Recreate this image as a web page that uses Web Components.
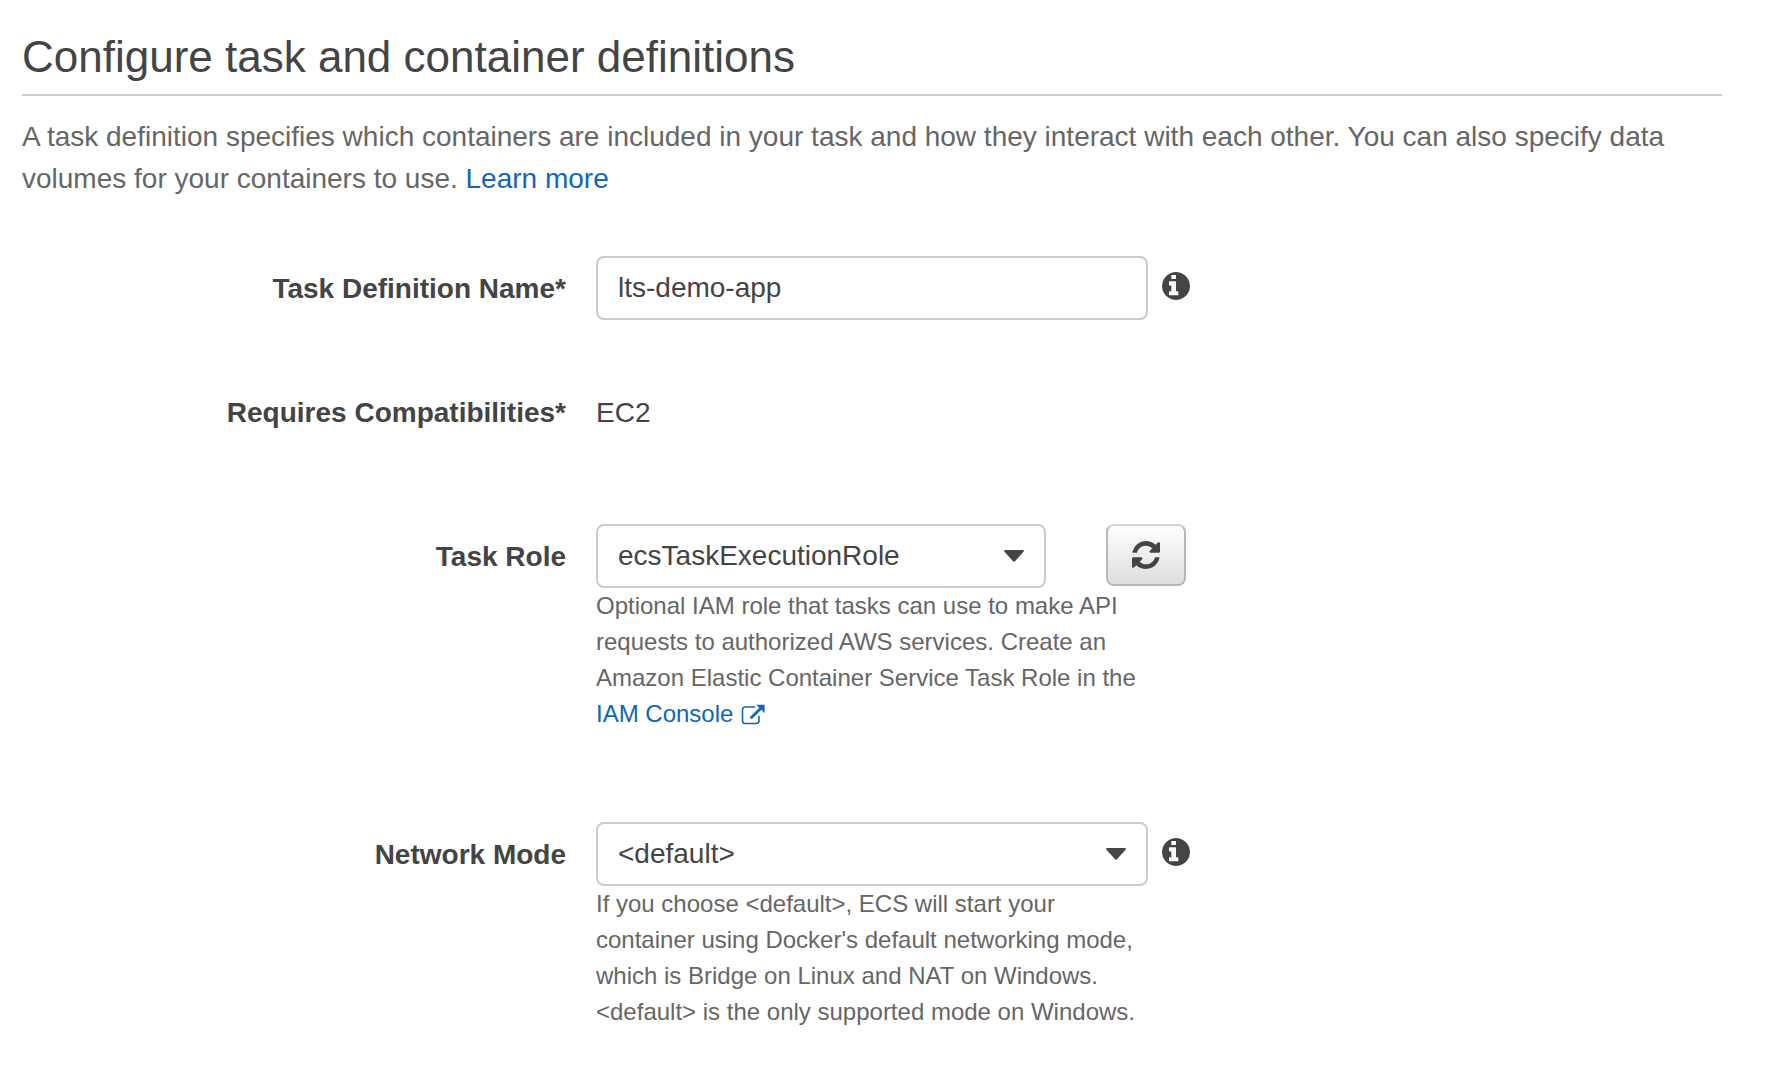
<!DOCTYPE html>
<html lang="en">
<head>
<meta charset="utf-8">
<meta name="viewport" content="width=device-width, initial-scale=1">
<title>Configure task and container definitions</title>
<style>
  body {
    margin: 0;
    background: #fff;
    color: #444;
    font: 28px/42px "Liberation Sans", Arial, sans-serif;
  }
</style>
</head>
<body>
<task-definition-page></task-definition-page>

<template id="page-template">
  <style>
    :host { display: block; padding: 33px 50px 32px 22px; }
    form { display: flex; flex-direction: column; gap: 60px; margin: 0; }
  </style>
  <page-intro heading="Configure task and container definitions">A task definition specifies which containers are included in your task and how they interact with each other. You can also specify data volumes for your containers to use. <text-link href="#learn-more">Learn more</text-link></page-intro>
  <form>
    <text-field label="Task Definition Name*" value="lts-demo-app">
      <info-button slot="action" label="About the task definition name"></info-button>
    </text-field>
    <static-field label="Requires Compatibilities*">EC2</static-field>
    <select-field label="Task Role" options="ecsTaskExecutionRole" narrow>
      <refresh-button slot="action"></refresh-button>
      <span slot="help">Optional IAM role that tasks can use to make API requests to authorized AWS services. Create an Amazon Elastic Container Service Task Role in the <text-link href="#iam-console" external>IAM Console</text-link></span>
    </select-field>
    <select-field label="Network Mode" options="&lt;default&gt;|Bridge|Host|None">
      <info-button slot="action" label="About network mode"></info-button>
      <span slot="help">If you choose &lt;default&gt;, ECS will start your container using Docker's default networking mode, which is Bridge on Linux and NAT on Windows. &lt;default&gt; is the only supported mode on Windows.</span>
    </select-field>
  </form>
</template>

<template id="intro-template">
  <style>
    :host { display: block; margin-bottom: 56px; }
    h1 {
      margin: 0 0 20px;
      padding-bottom: 13px;
      border-bottom: 2px solid #ccc;
      font-size: 44px;
      line-height: 48px;
      font-weight: normal;
    }
    p { margin: 0; color: #666; }
  </style>
  <h1></h1>
  <p><slot></slot></p>
</template>

<template id="link-template">
  <style>
    :host { display: inline; }
    a { color: #1166bb; text-decoration: none; }
    a:hover { text-decoration: underline; }
    svg { width: 24px; height: 21px; margin-left: 8px; vertical-align: -3px; }
    :host(:not([external])) svg { display: none; }
  </style>
  <a><slot></slot><svg viewBox="0 0 24 21" aria-hidden="true">
    <path d="M14 3H4.200Q1.500 3 1.500 5.700V16.800Q1.500 19.500 4.200 19.500H15.300Q18 19.500 18 16.800V12" fill="none" stroke="currentColor" stroke-width="1.600"/>
    <path d="M9.700 14.300 19.800 4.200" fill="none" stroke="currentColor" stroke-width="2.800"/>
    <path d="M15.200 .8H23.600V9.200Z" fill="currentColor"/>
  </svg></a>
</template>

<template id="field-template">
  <style>
    :host {
      display: grid;
      grid-template-columns: 32% minmax(0, 1fr);
      column-gap: 30px;
      align-items: start;
      --control-width: 552px;
      --action-gap: 14px;
    }
    :host([narrow]) { --control-width: 450px; --action-gap: 60px; }
    .label { padding-top: 12px; text-align: right; font-weight: bold; }
    .line { display: flex; gap: var(--action-gap); align-items: flex-start; }
    .control { flex: 0 1 var(--control-width); min-width: 0; display: grid; align-items: center; }
    .help {
      display: block;
      max-width: 552px;
      padding-bottom: 30px;
      color: #666;
      font-size: 24px;
      line-height: 36px;
    }
    .static { padding: 12px 0 30px; }
    input, select {
      grid-area: 1 / 1;
      box-sizing: border-box;
      width: 100%;
      height: 64px;
      margin: 0;
      padding: 0 20px;
      border: 2px solid #ccc;
      border-radius: 8px;
      background: #fff;
      color: inherit;
      font: inherit;
      appearance: none;
    }
    select { padding-right: 60px; }
    .arrow {
      grid-area: 1 / 1;
      justify-self: end;
      width: 20px;
      height: 12px;
      margin-right: 22px;
      pointer-events: none;
    }
  </style>
</template>

<template id="info-template">
  <style>
    :host { display: block; }
    button { display: block; margin: 0; padding: 16px 0; border: 0; background: none; color: inherit; cursor: pointer; }
    svg { display: block; width: 28px; height: 28px; }
  </style>
  <button type="button"><svg viewBox="128 128 1536 1536" fill="currentColor" aria-hidden="true"><path d="M1024 1376v-160q0-14-9-23t-23-9h-96v-512q0-14-9-23t-23-9h-320q-14 0-23 9t-9 23v160q0 14 9 23t23 9h96v320h-96q-14 0-23 9t-9 23v160q0 14 9 23t23 9h448q14 0 23-9t9-23zm-128-896v-160q0-14-9-23t-23-9h-192q-14 0-23 9t-9 23v160q0 14 9 23t23 9h192q14 0 23-9t9-23zm768 416q0 209-103 385.500t-279.500 279.500-385.500 103-385.500-103-279.500-279.500-103-385.500 103-385.500 279.500-279.500 385.500-103 385.500 103 279.500 279.500 103 385.500z"/></svg></button>
</template>

<template id="refresh-template">
  <style>
    :host { display: block; }
    button {
      display: grid;
      place-items: center;
      box-sizing: border-box;
      width: 80px;
      height: 62px;
      margin: 0;
      padding: 0;
      border: 2px solid #b8b8b8;
      border-top-color: #d4d4d4;
      border-radius: 8px;
      background: linear-gradient(#fff, #ddd);
      background-clip: padding-box;
      color: inherit;
      cursor: pointer;
    }
    svg { display: block; width: 28px; height: 28px; }
  </style>
  <button type="button" aria-label="Refresh roles"><svg viewBox="128 128 1536 1536" fill="currentColor" aria-hidden="true"><path d="M1639 1056q0 5-1 7-64 268-268 434.500t-478 166.500q-146 0-282.500-55t-243.500-157l-129 129q-19 19-45 19t-45-19-19-45v-448q0-26 19-45t45-19h448q26 0 45 19t19 45-19 45l-137 137q71 66 161 102t187 36q134 0 250-65t186-179q11-17 53-117 8-23 30-23h192q13 0 22.500 9.500t9.500 22.500zm25-800v448q0 26-19 45t-45 19h-448q-26 0-45-19t-19-45 19-45l138-138q-148-137-349-137-134 0-250 65t-186 179q-11 17-53 117-8 23-30 23h-199q-13 0-22.500-9.500t-9.500-22.500v-7q65-268 270-434.500t480-166.500q146 0 284 55.500t245 156.500l130-129q19-19 45-19t45 19 19 45z"/></svg></button>
</template>

<script>
  class BaseElement extends HTMLElement {
    constructor() {
      super();
      this.attachShadow({ mode: "open" });
    }
    connectedCallback() {
      if (this.shadowRoot.childNodes.length) return;
      const template = document.getElementById(this.constructor.template);
      this.shadowRoot.append(document.importNode(template.content, true));
      this.render(this.shadowRoot);
    }
    render() {}
  }

  class TaskDefinitionPage extends BaseElement {
    static template = "page-template";
  }

  class PageIntro extends BaseElement {
    static template = "intro-template";
    render(root) {
      root.querySelector("h1").textContent = this.getAttribute("heading");
    }
  }

  class TextLink extends BaseElement {
    static template = "link-template";
    render(root) {
      root.querySelector("a").href = this.getAttribute("href");
    }
  }

  class InfoButton extends BaseElement {
    static template = "info-template";
    render(root) {
      root.querySelector("button").setAttribute("aria-label", this.getAttribute("label"));
    }
  }

  class RefreshButton extends BaseElement {
    static template = "refresh-template";
  }

  class TextField extends BaseElement {
    static template = "field-template";
    render(root) {
      root.append(document.createRange().createContextualFragment(`
        <label class="label" for="control"></label>
        <div class="line">
          <div class="control"><input id="control" type="text"></div>
          <slot name="action"></slot>
        </div>`));
      root.querySelector("label").textContent = this.getAttribute("label");
      root.querySelector("input").value = this.getAttribute("value");
    }
  }

  class StaticField extends BaseElement {
    static template = "field-template";
    render(root) {
      root.append(document.createRange().createContextualFragment(`
        <div class="label"></div>
        <div class="static"><slot></slot></div>`));
      root.querySelector(".label").textContent = this.getAttribute("label");
    }
  }

  class SelectField extends BaseElement {
    static template = "field-template";
    render(root) {
      root.append(document.createRange().createContextualFragment(`
        <label class="label" for="control"></label>
        <div>
          <div class="line">
            <div class="control">
              <select id="control"></select>
              <svg class="arrow" viewBox="0 0 20 12" fill="currentColor" aria-hidden="true"><path d="M1 0H19Q20.500 .5 19.500 1.800L11 11.300Q10 12.200 9 11.300L.5 1.800Q-.5 .5 1 0Z"/></svg>
            </div>
            <slot name="action"></slot>
          </div>
          <div class="help"><slot name="help"></slot></div>
        </div>`));
      root.querySelector("label").textContent = this.getAttribute("label");
      const select = root.querySelector("select");
      for (const text of this.getAttribute("options").split("|")) select.add(new Option(text));
    }
  }

  customElements.define("task-definition-page", TaskDefinitionPage);
  customElements.define("page-intro", PageIntro);
  customElements.define("text-link", TextLink);
  customElements.define("info-button", InfoButton);
  customElements.define("refresh-button", RefreshButton);
  customElements.define("text-field", TextField);
  customElements.define("static-field", StaticField);
  customElements.define("select-field", SelectField);
</script>
</body>
</html>
